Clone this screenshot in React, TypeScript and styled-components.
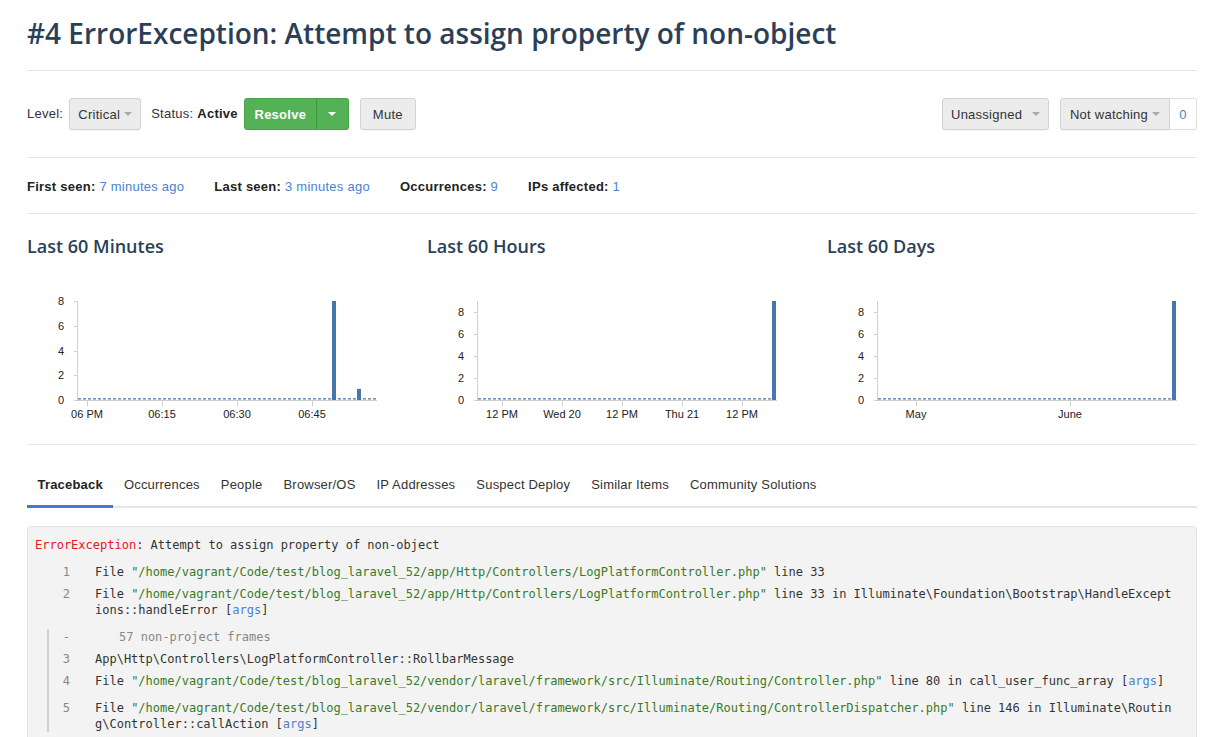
import React from 'react';
import styled, { createGlobalStyle } from 'styled-components';

const GlobalStyle = createGlobalStyle`
  html, body { margin: 0; padding: 0; background: #fff; }
  body {
    font-family: "Liberation Sans", Arial, Helvetica, sans-serif;
    font-size: 13px;
    letter-spacing: 0.25px;
    color: #333;
  }
`;

const Page = styled.div`
  width: 1170px;
  margin-left: 27px;
`;

const Header = styled.header`
  padding: 18px 0 21px;
  border-bottom: 1px solid #e7e7e7;
`;

const Title = styled.h1`
  margin: 0;
  font-family: "Open Sans", sans-serif;
  font-weight: 600;
  font-size: 28px;
  line-height: 31px;
  letter-spacing: 0;
  color: #2b3f59;
`;

const Toolbar = styled.div`
  display: flex;
  align-items: center;
  justify-content: space-between;
  padding: 27px 0;
  border-bottom: 1px solid #e7e7e7;
`;

const Group = styled.div`
  display: flex;
  align-items: center;
`;

const Text = styled.span<{ $ml?: number; $mr?: number }>`
  margin-left: ${p => p.$ml ?? 0}px;
  margin-right: ${p => p.$mr ?? 0}px;
  line-height: 18px;
  white-space: nowrap;
`;

const Strong = styled.b`
  font-weight: 700;
  color: #222;
`;

const Caret = styled.span<{ $light?: boolean }>`
  display: inline-block;
  flex: none;
  width: 0;
  height: 0;
  border-left: 4px solid transparent;
  border-right: 4px solid transparent;
  border-top: 4px solid ${p => (p.$light ? '#fff' : '#a9a9a9')};
`;

const Button = styled.button<{ $width: number; $spread?: boolean; $ml?: number; $join?: boolean }>`
  box-sizing: border-box;
  height: 32px;
  width: ${p => p.$width}px;
  margin-left: ${p => p.$ml ?? 0}px;
  padding: 0 8px;
  display: inline-flex;
  align-items: center;
  justify-content: ${p => (p.$spread ? 'space-between' : 'center')};
  gap: 4px;
  white-space: nowrap;
  background: #ececec;
  border: 1px solid #d2d2d2;
  border-radius: ${p => (p.$join ? '3px 0 0 3px' : '3px')};
  box-shadow: 0 1px 1px rgba(0, 0, 0, 0.04);
  font-family: "Liberation Sans", Arial, sans-serif;
  font-size: 13px;
  letter-spacing: 0.25px;
  color: #333;
  cursor: pointer;
`;

const SplitGroup = styled.div`
  display: inline-flex;
`;

const SuccessButton = styled.button<{ $width: number; $toggle?: boolean }>`
  box-sizing: border-box;
  height: 32px;
  width: ${p => p.$width}px;
  display: inline-flex;
  align-items: center;
  justify-content: center;
  padding: 0;
  background: #55b155;
  border: 1px solid #47a447;
  border-left-color: ${p => (p.$toggle ? '#3f963f' : '#47a447')};
  border-radius: ${p => (p.$toggle ? '0 3px 3px 0' : '3px 0 0 3px')};
  margin-left: ${p => (p.$toggle ? '-1px' : '0')};
  font-family: "Liberation Sans", Arial, sans-serif;
  font-size: 13px;
  letter-spacing: 0.25px;
  font-weight: 700;
  color: #fff;
  cursor: pointer;
`;

const Counter = styled.a`
  box-sizing: border-box;
  height: 32px;
  width: 27px;
  display: inline-flex;
  align-items: center;
  justify-content: center;
  border: 1px solid #dedede;
  border-left: 0;
  border-radius: 0 3px 3px 0;
  background: #fff;
  color: #4b82d2;
  font-size: 13px;
`;

const Stats = styled.div`
  display: flex;
  gap: 30px;
  padding: 20px 0 17px;
  line-height: 18px;
  border-bottom: 1px solid #e7e7e7;
`;

const StatValue = styled.a`
  color: #4b82d2;
  text-decoration: none;
`;

const Charts = styled.div`
  display: grid;
  grid-template-columns: 400px 400px 370px;
  padding: 20px 0 19px;
  border-bottom: 1px solid #e7e7e7;
`;

const ChartTitle = styled.h3`
  margin: 0;
  font-family: "Open Sans", sans-serif;
  font-weight: 600;
  font-size: 18px;
  line-height: 24px;
  letter-spacing: 0;
  color: #2b3f59;
`;

const ChartSvg = styled.svg`
  display: block;
  margin-top: 22px;
  text {
    font-family: "Liberation Sans", Arial, sans-serif;
    font-size: 11px;
    letter-spacing: 0;
    fill: #222;
  }
`;

const TabList = styled.nav`
  display: flex;
  margin-top: 19px;
  border-bottom: 2px solid #e6e6e6;
`;

const Tab = styled.a<{ $active?: boolean }>`
  padding: 12px 10.5px 11px;
  margin-bottom: -2px;
  line-height: 18px;
  letter-spacing: 0.2px;
  font-weight: ${p => (p.$active ? 700 : 400)};
  color: ${p => (p.$active ? '#222' : '#333')};
  border-bottom: 3px solid ${p => (p.$active ? '#3f7cc9' : 'transparent')};
  cursor: pointer;
`;

const Trace = styled.div`
  margin-top: 18px;
  background: #f3f3f3;
  border: 1px solid #e3e3e3;
  border-radius: 4px;
  padding: 10px 22px 30px 7px;
  font-family: "DejaVu Sans Mono", Menlo, monospace;
  font-size: 12px;
  line-height: 16px;
  letter-spacing: 0;
  color: #333;
`;

const TraceHead = styled.div`
  margin-bottom: 11px;
`;

const ErrName = styled.span`
  color: #e3161d;
`;

const FrameNo = styled.span`
  flex: 0 0 60px;
  box-sizing: border-box;
  text-align: right;
  padding-right: 25px;
  color: #888;
`;

const Frame = styled.div<{ $args?: boolean }>`
  display: flex;
  margin-bottom: ${p => (p.$args ? 11 : 6)}px;
`;

const FrameText = styled.span`
  flex: 1;
  min-width: 0;
  word-break: break-all;
`;

const Path = styled.span`
  color: #3a7a24;
`;

const ArgsLink = styled.a`
  color: #4b82d2;
`;

const Hidden = styled.span`
  padding-left: 24px;
  color: #888;
`;

const Collapsed = styled.div`
  margin-left: 12px;
  border-left: 2px solid #d2d2d2;
  ${FrameNo} {
    flex-basis: 46px;
  }
`;

type Tick = { x: number; label: string };
type Bar = { x: number; v: number };

const BAR = '#4776ab';

function Chart({ max, labels, ticks, bars }: { max: number; labels: number[]; ticks: Tick[]; bars: Bar[] }) {
  const base = 120;
  const top = 21;
  const y = (v: number) => base - (v / max) * (base - top);
  return (
    <ChartSvg width={370} height={145} viewBox="0 0 370 145">
      <line x1={50.5} y1={top} x2={50.5} y2={121} stroke="#cfcfcf" />
      <line x1={50} y1={120.5} x2={350} y2={120.5} stroke="#cfcfcf" />
      {labels.map(v => (
        <g key={v}>
          <line x1={47} x2={50} y1={Math.round(y(v)) + 0.5} y2={Math.round(y(v)) + 0.5} stroke="#cfcfcf" />
          <text x={37} y={y(v) + 4} textAnchor="end">
            {v}
          </text>
        </g>
      ))}
      {ticks.map(t => (
        <g key={t.x}>
          <line x1={t.x + 0.5} x2={t.x + 0.5} y1={121} y2={126} stroke="#cfcfcf" />
          <text x={t.x} y={138} textAnchor="middle">
            {t.label}
          </text>
        </g>
      ))}
      <line x1={51} x2={350} y1={118.8} y2={118.8} stroke={BAR} strokeWidth={1.3} strokeDasharray="3 2" />
      {bars.map(b => (
        <rect key={b.x} x={b.x} y={y(b.v)} width={4} height={base - y(b.v)} fill={BAR} />
      ))}
    </ChartSvg>
  );
}

const tabs = [
  'Traceback',
  'Occurrences',
  'People',
  'Browser/OS',
  'IP Addresses',
  'Suspect Deploy',
  'Similar Items',
  'Community Solutions',
];

export default function App() {
  return (
    <>
      <GlobalStyle />
      <Page>
        <Header>
          <Title>#4 ErrorException: Attempt to assign property of non-object</Title>
        </Header>

        <Toolbar>
          <Group>
            <Text $mr={6}>Level:</Text>
            <Button $width={72}>
              Critical <Caret />
            </Button>
            <Text $ml={10} $mr={6}>
              Status: <Strong>Active</Strong>
            </Text>
            <SplitGroup>
              <SuccessButton $width={73}>Resolve</SuccessButton>
              <SuccessButton $width={33} $toggle>
                <Caret $light />
              </SuccessButton>
            </SplitGroup>
            <Button $width={56} $ml={11}>
              Mute
            </Button>
          </Group>
          <Group>
            <Button $width={107} $spread>
              Unassigned <Caret />
            </Button>
            <Button $width={110} $ml={11} $join>
              Not watching <Caret />
            </Button>
            <Counter>0</Counter>
          </Group>
        </Toolbar>

        <Stats>
          <span>
            <Strong>First seen:</Strong> <StatValue>7 minutes ago</StatValue>
          </span>
          <span>
            <Strong>Last seen:</Strong> <StatValue>3 minutes ago</StatValue>
          </span>
          <span>
            <Strong>Occurrences:</Strong> <StatValue>9</StatValue>
          </span>
          <span>
            <Strong>IPs affected:</Strong> <StatValue>1</StatValue>
          </span>
        </Stats>

        <Charts>
          <div>
            <ChartTitle>Last 60 Minutes</ChartTitle>
            <Chart
              max={8}
              labels={[0, 2, 4, 6, 8]}
              ticks={[
                { x: 60, label: '06 PM' },
                { x: 135, label: '06:15' },
                { x: 210, label: '06:30' },
                { x: 285, label: '06:45' },
              ]}
              bars={[
                { x: 305, v: 8 },
                { x: 330, v: 0.9 },
              ]}
            />
          </div>
          <div>
            <ChartTitle>Last 60 Hours</ChartTitle>
            <Chart
              max={9}
              labels={[0, 2, 4, 6, 8]}
              ticks={[
                { x: 75, label: '12 PM' },
                { x: 135, label: 'Wed 20' },
                { x: 195, label: '12 PM' },
                { x: 255, label: 'Thu 21' },
                { x: 315, label: '12 PM' },
              ]}
              bars={[{ x: 345, v: 9 }]}
            />
          </div>
          <div>
            <ChartTitle>Last 60 Days</ChartTitle>
            <Chart
              max={9}
              labels={[0, 2, 4, 6, 8]}
              ticks={[
                { x: 89, label: 'May' },
                { x: 243, label: 'June' },
              ]}
              bars={[{ x: 345, v: 9 }]}
            />
          </div>
        </Charts>

        <TabList>
          {tabs.map((t, i) => (
            <Tab key={t} $active={i === 0}>
              {t}
            </Tab>
          ))}
        </TabList>

        <Trace>
          <TraceHead>
            <ErrName>ErrorException</ErrName>: Attempt to assign property of non-object
          </TraceHead>
          <Frame>
            <FrameNo>1</FrameNo>
            <FrameText>
              File <Path>"/home/vagrant/Code/test/blog_laravel_52/app/Http/Controllers/LogPlatformController.php"</Path> line 33
            </FrameText>
          </Frame>
          <Frame $args>
            <FrameNo>2</FrameNo>
            <FrameText>
              File <Path>"/home/vagrant/Code/test/blog_laravel_52/app/Http/Controllers/LogPlatformController.php"</Path> line 33
              in Illuminate\Foundation\Bootstrap\HandleExceptions::handleError [<ArgsLink>args</ArgsLink>]
            </FrameText>
          </Frame>
          <Collapsed>
            <Frame>
              <FrameNo>-</FrameNo>
              <FrameText>
                <Hidden>57 non-project frames</Hidden>
              </FrameText>
            </Frame>
            <Frame>
              <FrameNo>3</FrameNo>
              <FrameText>App\Http\Controllers\LogPlatformController::RollbarMessage</FrameText>
            </Frame>
            <Frame $args>
              <FrameNo>4</FrameNo>
              <FrameText>
                File <Path>"/home/vagrant/Code/test/blog_laravel_52/vendor/laravel/framework/src/Illuminate/Routing/Controller.php"</Path> line 80
                in call_user_func_array [<ArgsLink>args</ArgsLink>]
              </FrameText>
            </Frame>
            <Frame $args>
              <FrameNo>5</FrameNo>
              <FrameText>
                File <Path>"/home/vagrant/Code/test/blog_laravel_52/vendor/laravel/framework/src/Illuminate/Routing/ControllerDispatcher.php"</Path> line 146
                in Illuminate\Routing\Controller::callAction [<ArgsLink>args</ArgsLink>]
              </FrameText>
            </Frame>
          </Collapsed>
        </Trace>
      </Page>
    </>
  );
}
